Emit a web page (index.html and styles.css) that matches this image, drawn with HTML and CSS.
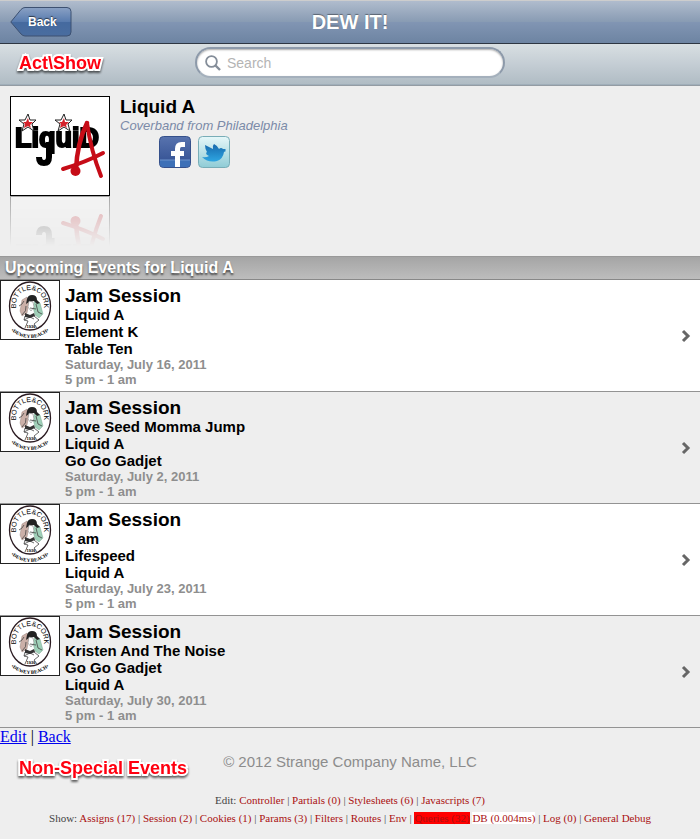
FILE: index.html
```html
<!DOCTYPE html>
<html lang="en">
<head>
<meta charset="utf-8">
<meta name="viewport" content="width=device-width, initial-scale=1">
<title>DEW IT!</title>
<link rel="stylesheet" href="styles.css">
</head>
<body>
<svg class="defs" aria-hidden="true">
  <defs>
    <linearGradient id="backFill" x1="0" y1="0" x2="0" y2="1">
      <stop offset="0" stop-color="#8aa1c4"/><stop offset=".5" stop-color="#587bae"/><stop offset=".51" stop-color="#456a9f"/><stop offset="1" stop-color="#4a6d9f"/>
    </linearGradient>
    <path id="sealTop" d="M16 28C14 4 46 4 44 28"/>
    <path id="sealBottom" d="M9 49Q30 67 51 49"/>
    <symbol id="seal" viewBox="0 0 60 60">
      <rect x=".5" y=".5" width="59" height="59" fill="#fff" stroke="#222"/>
      <ellipse cx="30" cy="26" rx="20.500" ry="24" fill="#fff" stroke="#2a1a20" stroke-width="1.300"/>
      <path d="M22 20l5-3 2 6-2 10-5 3-2-5z" fill="#cbb0a8" stroke="#8d7770" stroke-width=".4"/>
      <path d="M35 20l5 3 3 11-4 4-4-3-2-8z" fill="#9fd0b8" stroke="#6f9c86" stroke-width=".4"/>
      <path d="M27 19q1-4 5-4 5 0 5 5l3 3-3 1-3-3-5 1-3 2z" fill="#222"/>
      <path d="M29 21l4 1 1 5-3 4-3-4z" fill="#fff" stroke="#777" stroke-width=".5"/>
      <path d="M19 26q3-1 5-5M22 35q5-4 4-9M36 24l2 8 4 2M25 36l-1 4 4 1-3 7M34 36l5 4-5 4 3 4M30 28l6 1M24 40l6-3 4 2" fill="none" stroke="#444" stroke-width=".8"/>
      <path d="M25 33l5 2 4-2 1 3-5 2-5-1z" fill="#333"/>
      <text class="seal-name"><textPath href="#sealTop" startOffset="50%">BOTTLE&amp;CORK</textPath></text>
      <text class="seal-year" x="31" y="48">1936</text>
      <text class="seal-place"><textPath href="#sealBottom" startOffset="50%">•DEWEY BEACH•</textPath></text>
    </symbol>
    <symbol id="chevron" viewBox="0 0 10 14">
      <path d="M2 2l5 5-5 5" fill="none" stroke="#666" stroke-width="3"/>
    </symbol>
  </defs>
</svg>

<header class="navbar">
  <a class="back" href="#">
    <svg class="back-shape" viewBox="0 0 62 30" aria-hidden="true">
      <path d="M.8 15L11 2.500Q13 .5 15 .5H57q4 0 4 4V25q0 4-4 4H15q-2 0-4-2z" fill="url(#backFill)" stroke="#3d5171"/>
    </svg>
    <span class="back-label">Back</span>
  </a>
  <h1 class="navbar-title">DEW IT!</h1>
</header>

<form class="toolbar" role="search">
  <strong class="tag">Act\Show</strong>
  <label class="search">
    <svg class="search-icon" viewBox="0 0 16 16" aria-hidden="true"><circle cx="6.500" cy="6.500" r="5.400" fill="none" stroke="#848d99" stroke-width="1.800"/><path d="M10.500 10.500l4.500 4.500" stroke="#848d99" stroke-width="2.400"/></svg>
    <input class="search-input" type="search" placeholder="Search" aria-label="Search">
  </label>
</form>

<main>
  <section class="artist">
    <svg class="artist-logo" viewBox="0 0 100 100" role="img" aria-label="Liquid A">
      <rect x=".5" y=".5" width="99" height="99" fill="#fff" stroke="#000"/>
      <text class="logo-word" x="5" y="51">LiquiD</text>
      <path d="M39 46v15q0 6-5 6t-5-6" fill="none" stroke="#000" stroke-width="6"/>
      <g stroke="#222" stroke-width="1" fill="#fff">
        <path d="M18 18l2 6 6 0-4 4 2 7-6-4-6 4 2-7-5-4 6 0z"/>
        <path d="M54 18l2 6 6 0-4 4 2 7-6-4-6 4 2-7-5-4 6 0z"/>
      </g>
      <g fill="#d5222b">
        <path d="M18 22l1 4 4 0-3 3 1 3-3-2-4 2 1-4-2-2 3 0z"/>
        <path d="M54 22l1 4 4 0-3 3 1 3-3-2-4 2 1-4-2-2 3 0z"/>
      </g>
      <g fill="none" stroke="#c60c17" stroke-linecap="round" stroke-linejoin="round">
        <path d="M66 74Q67 47 77 27" stroke-width="4.500"/>
        <path d="M77 27Q81 55 91 80" stroke-width="4"/>
        <path d="M53 73Q76 66 93 57" stroke-width="4"/>
      </g>
      <circle cx="65.500" cy="75" r="5" fill="#c60c17"/>
    </svg>
    <div class="artist-info">
      <h2 class="artist-name">Liquid A</h2>
      <p class="artist-about">Coverband from Philadelphia</p>
      <div class="social">
        <a href="#" aria-label="Facebook">
          <svg class="social-icon" viewBox="0 0 32 32" aria-hidden="true">
            <defs><linearGradient id="fb" x1="0" y1="0" x2="0" y2="1"><stop offset="0" stop-color="#5873ae"/><stop offset="1" stop-color="#2f4d90"/></linearGradient></defs>
            <rect x=".5" y=".5" width="31" height="31" rx="4" fill="url(#fb)" stroke="#35508b"/>
            <path d="M1 24h30v4q0 3-3 3H4q-3 0-3-3z" fill="#3d70b7"/><path d="M1 24h30" stroke="#6f94cc"/>
            <path d="M18.500 31V13q0-4.500 4-4.500H26M12 17.500h13" fill="none" stroke="#fff" stroke-width="5"/>
          </svg>
        </a>
        <a href="#" aria-label="Twitter">
          <svg class="social-icon" viewBox="0 0 32 32" aria-hidden="true">
            <defs><linearGradient id="tw" x1="0" y1="0" x2="0" y2="1"><stop offset="0" stop-color="#e6f7f9"/><stop offset="1" stop-color="#8fccd6"/></linearGradient><linearGradient id="bird" x1="0" y1="0" x2="0" y2="1"><stop offset="0" stop-color="#1769ad"/><stop offset="1" stop-color="#2ea6e2"/></linearGradient></defs>
            <rect x=".5" y=".5" width="31" height="31" rx="4" fill="url(#tw)" stroke="#78adb7"/>
            <path d="M4 21q4 1 7-1-3-1-3-3l1-1q-2-3-2-7 4 2 8 4-1-3 1-5 4 2 5 5 2-2 4 0l3 0-1 1 1 1-2 1q-1 7-7 9-9 2-15-4z" fill="url(#bird)"/>
          </svg>
        </a>
      </div>
    </div>
  </section>

  <h2 class="section-title">Upcoming Events for Liquid A</h2>
  <ul class="events">
    <li><a class="event" href="#">
      <svg class="event-logo" role="img" aria-label="Bottle &amp; Cork, Dewey Beach"><use href="#seal"/></svg>
      <div class="event-info">
        <h3 class="event-name">Jam Session</h3>
        <p class="act">Liquid A</p><p class="act">Element K</p><p class="act">Table Ten</p>
        <p class="when">Saturday, July 16, 2011</p><p class="when">5 pm - 1 am</p>
      </div>
      <svg class="chevron" aria-hidden="true"><use href="#chevron"/></svg>
    </a></li>
    <li><a class="event" href="#">
      <svg class="event-logo" role="img" aria-label="Bottle &amp; Cork, Dewey Beach"><use href="#seal"/></svg>
      <div class="event-info">
        <h3 class="event-name">Jam Session</h3>
        <p class="act">Love Seed Momma Jump</p><p class="act">Liquid A</p><p class="act">Go Go Gadjet</p>
        <p class="when">Saturday, July 2, 2011</p><p class="when">5 pm - 1 am</p>
      </div>
      <svg class="chevron" aria-hidden="true"><use href="#chevron"/></svg>
    </a></li>
    <li><a class="event" href="#">
      <svg class="event-logo" role="img" aria-label="Bottle &amp; Cork, Dewey Beach"><use href="#seal"/></svg>
      <div class="event-info">
        <h3 class="event-name">Jam Session</h3>
        <p class="act">3 am</p><p class="act">Lifespeed</p><p class="act">Liquid A</p>
        <p class="when">Saturday, July 23, 2011</p><p class="when">5 pm - 1 am</p>
      </div>
      <svg class="chevron" aria-hidden="true"><use href="#chevron"/></svg>
    </a></li>
    <li><a class="event" href="#">
      <svg class="event-logo" role="img" aria-label="Bottle &amp; Cork, Dewey Beach"><use href="#seal"/></svg>
      <div class="event-info">
        <h3 class="event-name">Jam Session</h3>
        <p class="act">Kristen And The Noise</p><p class="act">Go Go Gadjet</p><p class="act">Liquid A</p>
        <p class="when">Saturday, July 30, 2011</p><p class="when">5 pm - 1 am</p>
      </div>
      <svg class="chevron" aria-hidden="true"><use href="#chevron"/></svg>
    </a></li>
  </ul>
  <p class="page-links"><a href="#">Edit</a> | <a href="#">Back</a></p>
</main>

<footer>
  <div class="legal">
    <strong class="tag">Non-Special Events</strong>
    <p class="copyright">© 2012 Strange Company Name, LLC</p>
  </div>
  <div class="debug">
    <p>Edit: <a href="#">Controller</a> | <a href="#">Partials (0)</a> | <a href="#">Stylesheets (6)</a> | <a href="#">Javascripts (7)</a></p>
    <p>Show: <a href="#">Assigns (17)</a> | <a href="#">Session (2)</a> | <a href="#">Cookies (1)</a> | <a href="#">Params (3)</a> | <a href="#">Filters</a> | <a href="#">Routes</a> | <a href="#">Env</a> | <a class="queries" href="#">Queries (32)</a> <a class="db" href="#">DB (0.004ms)</a> | <a href="#">Log (0)</a> | <a href="#">General Debug</a></p>
  </div>
</footer>
</body>
</html>
```
FILE: styles.css
```css
* { box-sizing: border-box; }

body {
  margin: 0;
  background: #eee;
  color: #000;
  font-family: "Liberation Sans", Arial, sans-serif;
}

h1, h2, h3, p, ul { margin: 0; padding: 0; }
ul { list-style: none; }
svg { display: block; }

.defs { position: absolute; width: 0; height: 0; }

.navbar {
  display: grid;
  grid-template-columns: 1fr auto 1fr;
  align-items: center;
  height: 44px;
  padding: 0 10px;
  border-top: 1px solid #cdcdcd;
  border-bottom: 1px solid #2d3642;
  background: linear-gradient(#b0bccd, #889bb3 50%, #8195b3 51%, #6d84a2);
}

.navbar-title {
  color: #fff;
  font-size: 20px;
  line-height: 24px;
  text-shadow: 0 -1px 1px rgba(0, 0, 0, .4);
}

.back {
  display: grid;
  align-items: center;
  width: 62px;
  color: #fff;
  font-size: 12px;
  font-weight: bold;
  text-decoration: none;
  text-shadow: 0 -1px 1px rgba(0, 0, 0, .6);
}
.back-shape, .back-label { grid-area: 1 / 1; }
.back-label { padding-left: 18px; }

.toolbar {
  display: grid;
  grid-template-columns: 1fr 310px 1fr;
  align-items: center;
  height: 42px;
  padding-bottom: 4px;
  border-bottom: 1px solid #949ca3;
  background: linear-gradient(#d8dfe2, #c4cdd4 50%, #b0bcc4 98%, #8799aa);
}

.tag {
  padding-left: 19px;
  color: #ff0010;
  font-size: 18px;
  line-height: 20px;
  -webkit-text-stroke: 4px #fff;
  paint-order: stroke fill;
  filter: drop-shadow(0 2px 1px rgba(0, 0, 0, .6));
}

.search {
  display: flex;
  align-items: center;
  gap: 6px;
  height: 31px;
  padding: 0 8px;
  border: 2px solid #8d9aaa;
  border-bottom-color: #a4b0bc;
  border-radius: 16px;
  background: #fff;
  box-shadow: inset 0 1px 2px #aaa;
}
.search-icon { width: 16px; height: 16px; flex: none; }
.search-input {
  flex: 1;
  min-width: 0;
  padding: 0;
  border: 0;
  outline: 0;
  background: transparent;
  font: 14px "Liberation Sans", Arial, sans-serif;
}
.search-input::placeholder { color: #b4b4b4; }

.artist {
  display: flex;
  align-items: flex-start;
  gap: 10px;
  padding: 10px 10px 60px;
}
.artist-logo {
  flex: none;
  width: 100px;
  height: 100px;
  -webkit-box-reflect: below 0 linear-gradient(transparent 50%, rgba(255, 255, 255, .3));
}
.logo-word {
  font: bold 27px "Liberation Sans Narrow", "Liberation Sans", sans-serif;
  stroke: #000;
  stroke-width: 2px;
}
.artist-name { font-size: 19px; line-height: 22px; }
.artist-about {
  color: #7b8aa8;
  font-size: 13px;
  font-style: italic;
  line-height: 16px;
}
.social {
  display: flex;
  gap: 7px;
  padding: 2px 0 0 39px;
}
.social-icon { width: 32px; height: 32px; }

.section-title {
  padding: 0 5px;
  border-top: 1px solid #999;
  border-bottom: 1px solid #888;
  background: linear-gradient(#a5a5a5, #bdbdbd);
  color: #fff;
  font-size: 16px;
  line-height: 22px;
  text-shadow: 0 2px 2px rgba(0, 0, 0, .6);
}

.events li { border-bottom: 1px solid #939393; background: #fff; }
.events li:nth-child(even) { background: #eee; }
.event {
  display: flex;
  gap: 5px;
  padding-right: 9px;
  color: inherit;
  text-decoration: none;
}
.event-logo { flex: none; width: 60px; height: 60px; }
.seal-name { font: 7px "Liberation Sans Narrow", "Liberation Sans", sans-serif; text-anchor: middle; }
.seal-year { font: bold 4px "Liberation Sans", sans-serif; text-anchor: middle; }
.seal-place { font: bold 5px "Liberation Serif", serif; text-anchor: middle; }
.event-info { flex: 1; padding: 5px 0 4px; }
.event-name { font-size: 19px; line-height: 21px; }
.act { font-size: 15px; font-weight: bold; line-height: 17px; }
.when { color: #8e8e8e; font-size: 13px; font-weight: bold; line-height: 15px; }
.chevron { align-self: center; width: 10px; height: 14px; }

.page-links {
  font: 16px/18px "Liberation Serif", "Times New Roman", serif;
}
.page-links a { color: #00e; }

.legal {
  display: grid;
  grid-template-columns: 1fr auto 1fr;
  padding-top: 6px;
}
.legal .tag { padding-top: 6px; }
.copyright { color: #8c8c8c; font-size: 15px; line-height: 20px; }

.debug {
  padding: 13px 0 8px;
  color: #444;
  font: 11px/18px "Liberation Serif", "Times New Roman", serif;
  text-align: center;
}
.debug a { color: #a11; text-decoration: none; }
.debug .queries { background: #f00; }
.debug .db { background: #fff; }
```
